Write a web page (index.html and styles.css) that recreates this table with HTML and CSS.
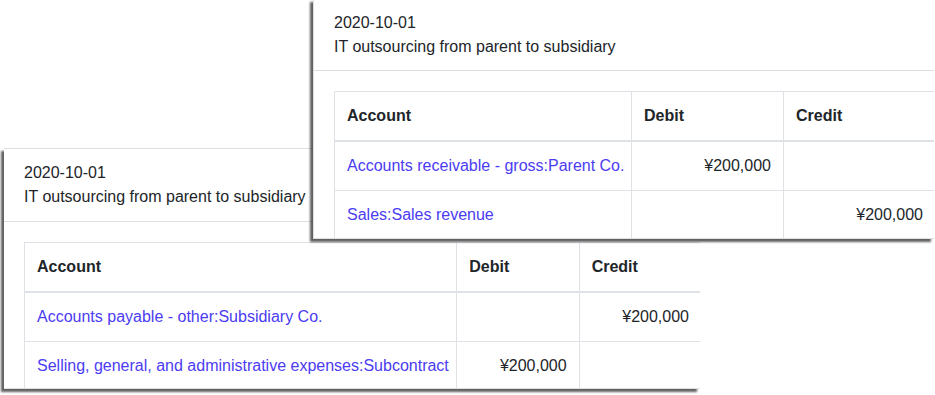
FILE: index.html
```html
<!DOCTYPE html>
<html lang="en">
<head>
<meta charset="utf-8">
<title>Journal entries</title>
<link rel="stylesheet" href="styles.css">
</head>
<body>
<div class="canvas">
  <section class="card card-back">
    <header class="card-header">
      <div>2020-10-01</div>
      <div>IT outsourcing from parent to subsidiary</div>
    </header>
    <div class="card-body">
      <table class="ledger ledger-back">
        <colgroup><col class="c-acc"><col class="c-amt"><col class="c-amt"></colgroup>
        <thead>
          <tr><th>Account</th><th>Debit</th><th>Credit</th></tr>
        </thead>
        <tbody>
          <tr><td><a href="#">Accounts payable - other:Subsidiary Co.</a></td><td class="num"></td><td class="num">¥200,000</td></tr>
          <tr><td><a href="#">Selling, general, and administrative expenses:Subcontract</a></td><td class="num">¥200,000</td><td class="num"></td></tr>
        </tbody>
      </table>
    </div>
  </section>

  <section class="card card-front">
    <header class="card-header">
      <div>2020-10-01</div>
      <div>IT outsourcing from parent to subsidiary</div>
    </header>
    <div class="card-body">
      <table class="ledger ledger-front">
        <colgroup><col class="c-acc"><col class="c-amt"><col class="c-amt"></colgroup>
        <thead>
          <tr><th>Account</th><th>Debit</th><th>Credit</th></tr>
        </thead>
        <tbody>
          <tr><td><a href="#">Accounts receivable - gross:Parent Co.</a></td><td class="num">¥200,000</td><td class="num"></td></tr>
          <tr><td><a href="#">Sales:Sales revenue</a></td><td class="num"></td><td class="num">¥200,000</td></tr>
        </tbody>
      </table>
    </div>
  </section>
</div>
</body>
</html>
```

FILE: styles.css
```css
html, body {
  margin: 0;
  padding: 0;
  background: #ffffff;
}

body {
  font-family: "Liberation Sans", Arial, sans-serif;
  font-size: 16px;
  line-height: 24px;
  color: #212529;
}

.canvas {
  position: relative;
  width: 935px;
  height: 395px;
  overflow: hidden;
}

.card {
  position: absolute;
  background: #ffffff;
  border: 1px solid rgba(0, 0, 0, 0.125);
  border-right: none;
  overflow: hidden;
  box-shadow: -3px 3px 2px rgba(0, 0, 0, 0.62);
  box-sizing: border-box;
}

.card-back {
  left: 4px;
  top: 148px;
  width: 696px;
  height: 241px;
  border-left: none;
}

.card-front {
  left: 313px;
  top: -1px;
  width: 621px;
  height: 240px;
}

.card-header {
  padding: 12px 20px;
  border-bottom: 1px solid rgba(0, 0, 0, 0.125);
}

.card-front .card-header {
  padding-top: 11px;
  padding-bottom: 11px;
}

.card-body {
  padding: 20px;
}

.ledger {
  border-collapse: collapse;
  table-layout: fixed;
}

.ledger th,
.ledger td {
  border: 1px solid #dee2e6;
  padding: 12px;
  text-align: left;
  vertical-align: top;
  white-space: nowrap;
  height: 24px;
}

.ledger thead th {
  border-bottom: 2px solid #dee2e6;
  font-weight: 700;
}

.ledger td.num {
  text-align: right;
}

.ledger a {
  color: #4b3cf2;
  text-decoration: none;
}

.ledger-back {
  width: 678px;
}

.ledger-back .c-acc { width: 431px; }
.ledger-back .c-amt { width: 122px; }

.ledger-front {
  width: 602px;
}

.ledger-front .c-acc { width: 297px; }
.ledger-front .c-amt { width: 152px; }
```
